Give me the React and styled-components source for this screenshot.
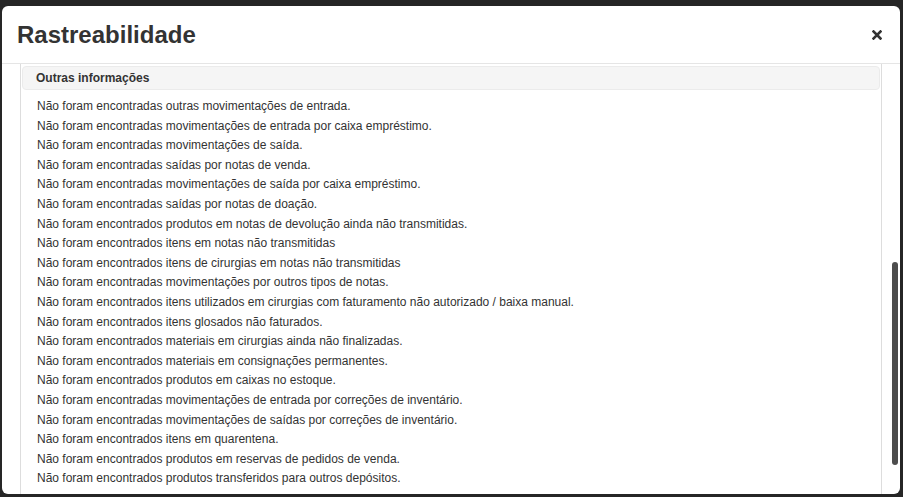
import React from 'react';
import styled, { createGlobalStyle } from 'styled-components';

const GlobalStyle = createGlobalStyle`
  html, body {
    margin: 0;
    padding: 0;
    background: #262626;
  }
  * {
    box-sizing: border-box;
  }
`;

const Page = styled.div`
  height: 497px;
  padding: 6px 3px 3px 2px;
  font-family: 'Liberation Sans', Arial, sans-serif;
`;

const Modal = styled.div`
  height: 100%;
  background: #fff;
  border-radius: 6px;
  display: flex;
  flex-direction: column;
  overflow: hidden;
`;

const Header = styled.div`
  height: 58px;
  flex-shrink: 0;
  padding: 0 18px 0 15px;
  border-bottom: 1px solid #e5e5e5;
  display: flex;
  align-items: center;
  justify-content: space-between;
`;

const Title = styled.h4`
  margin: 0;
  font-size: 24px;
  font-weight: 700;
  color: #333;
  line-height: 1;
`;

const CloseButton = styled.button`
  border: 0;
  background: none;
  padding: 0;
  width: 10px;
  height: 10px;
  display: flex;
  cursor: pointer;
  color: #333;
`;

const Body = styled.div`
  flex: 1;
  min-height: 0;
  display: flex;
  overflow: hidden;
`;

const Content = styled.div`
  flex: 1;
  padding-left: 18px;
  min-width: 0;
`;

const Panel = styled.div`
  height: 100%;
  border-left: 1px solid #ddd;
  border-right: 1px solid #ddd;
  padding: 2px 1px 0;
`;

const PanelHeading = styled.div`
  height: 24px;
  background: #f5f5f5;
  border: 1px solid #ebebeb;
  border-radius: 4px;
  padding-left: 13px;
  display: flex;
  align-items: center;
  font-size: 12px;
  font-weight: 700;
  color: #333;
`;

const List = styled.div`
  padding: 7px 0 0 15px;
`;

const Line = styled.div`
  font-size: 12px;
  line-height: 19.6px;
  color: #333;
  white-space: nowrap;
`;

const ScrollTrack = styled.div`
  width: 18px;
  flex-shrink: 0;
  padding: 198px 2px 0 10px;
`;

const ScrollThumb = styled.div`
  width: 6px;
  height: 203px;
  border-radius: 3px;
  background: #4d4d4d;
`;

const lines = [
  'Não foram encontradas outras movimentações de entrada.',
  'Não foram encontradas movimentações de entrada por caixa empréstimo.',
  'Não foram encontradas movimentações de saída.',
  'Não foram encontradas saídas por notas de venda.',
  'Não foram encontradas movimentações de saída por caixa empréstimo.',
  'Não foram encontradas saídas por notas de doação.',
  'Não foram encontrados produtos em notas de devolução ainda não transmitidas.',
  'Não foram encontrados itens em notas não transmitidas',
  'Não foram encontrados itens de cirurgias em notas não transmitidas',
  'Não foram encontradas movimentações por outros tipos de notas.',
  'Não foram encontrados itens utilizados em cirurgias com faturamento não autorizado / baixa manual.',
  'Não foram encontrados itens glosados não faturados.',
  'Não foram encontrados materiais em cirurgias ainda não finalizadas.',
  'Não foram encontrados materiais em consignações permanentes.',
  'Não foram encontrados produtos em caixas no estoque.',
  'Não foram encontradas movimentações de entrada por correções de inventário.',
  'Não foram encontradas movimentações de saídas por correções de inventário.',
  'Não foram encontrados itens em quarentena.',
  'Não foram encontrados produtos em reservas de pedidos de venda.',
  'Não foram encontrados produtos transferidos para outros depósitos.',
];

const App = () => (
  <Page>
    <GlobalStyle />
    <Modal>
      <Header>
        <Title>Rastreabilidade</Title>
        <CloseButton aria-label="Fechar">
          <svg width="10" height="10" viewBox="0 0 10 10">
            <path
              d="M1.5 1.5 L8.5 8.5 M8.5 1.5 L1.5 8.5"
              stroke="currentColor"
              strokeWidth="2.6"
              strokeLinecap="square"
            />
          </svg>
        </CloseButton>
      </Header>
      <Body>
        <Content>
          <Panel>
            <PanelHeading>Outras informações</PanelHeading>
            <List>
              {lines.map((text) => (
                <Line key={text}>{text}</Line>
              ))}
            </List>
          </Panel>
        </Content>
        <ScrollTrack>
          <ScrollThumb />
        </ScrollTrack>
      </Body>
    </Modal>
  </Page>
);

export default App;
